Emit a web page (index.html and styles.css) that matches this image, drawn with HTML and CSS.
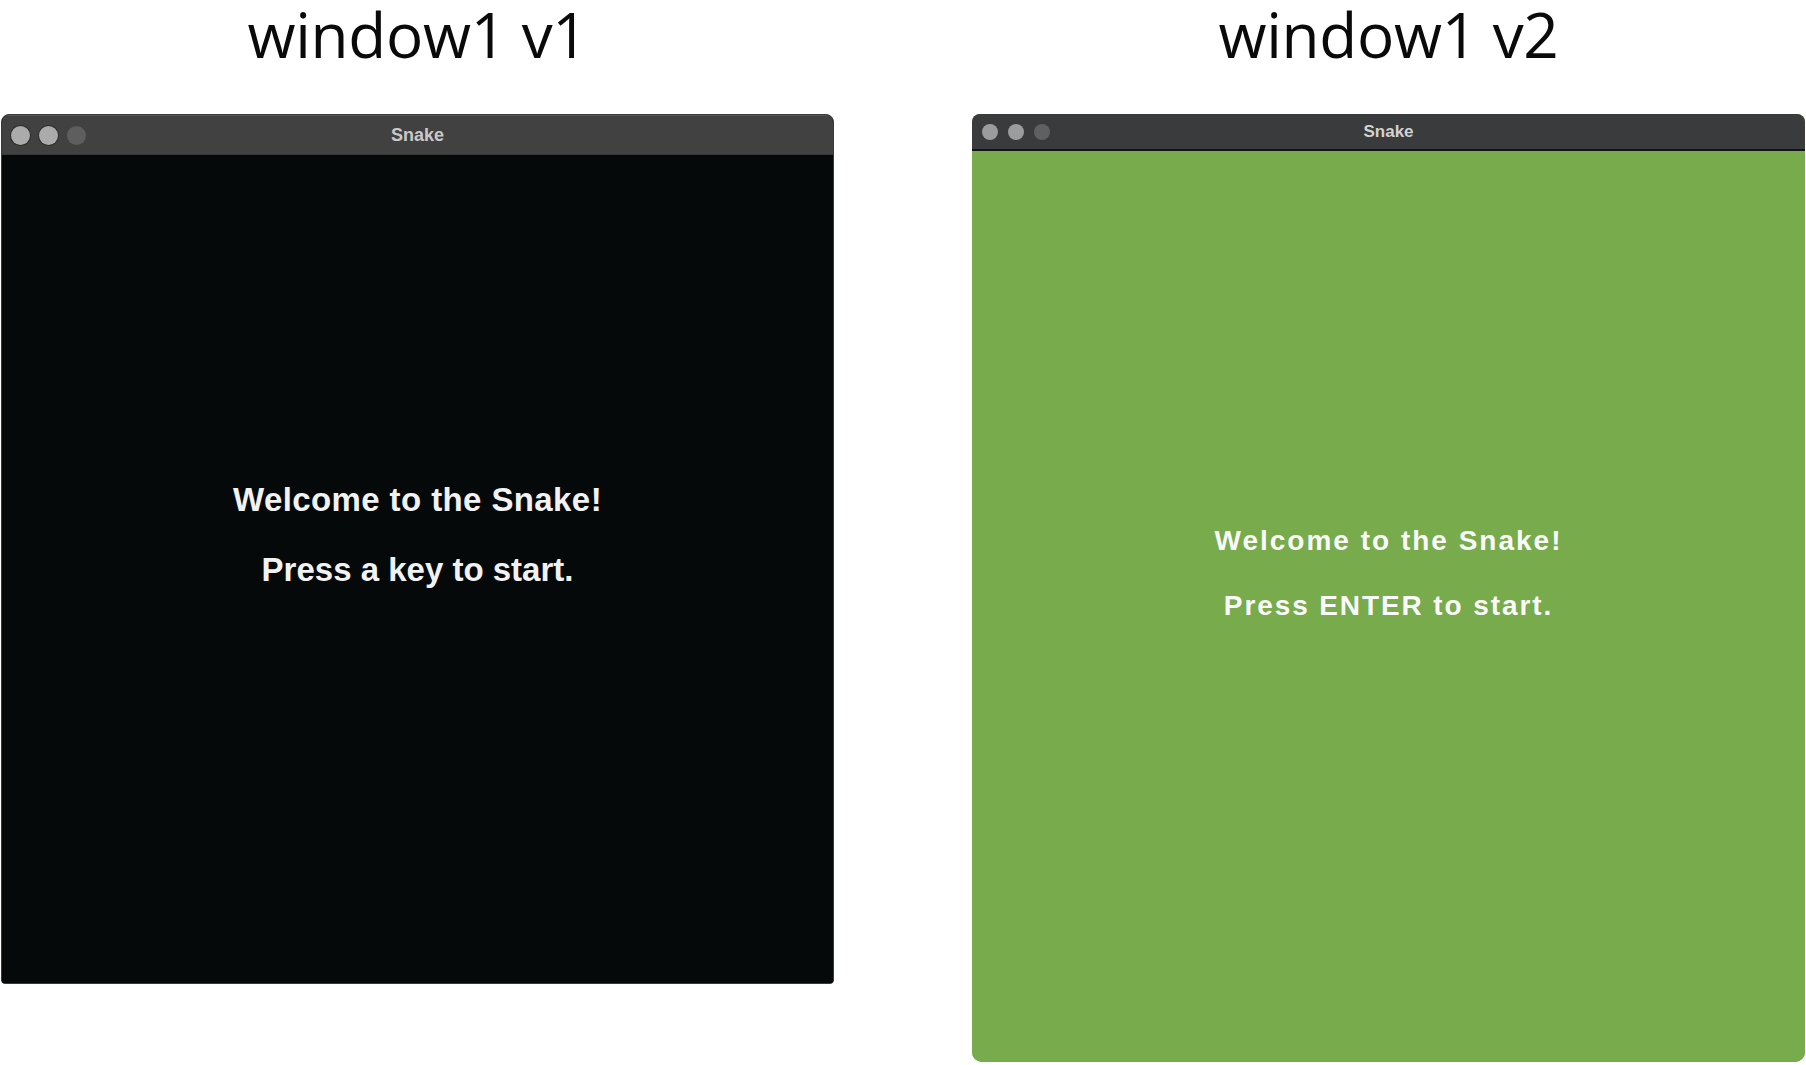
FILE: index.html
```html
<!DOCTYPE html>
<html>
<head>
<meta charset="utf-8">
<link rel="stylesheet" href="styles.css">
</head>
<body>
<div class="page">
  <section class="col">
    <h1 class="heading">window1 v1</h1>
    <div class="window win-dark">
      <div class="titlebar tb-dark">
        <div class="lights">
          <span class="light on"></span><span class="light on"></span><span class="light off"></span>
        </div>
        <div class="title">Snake</div>
        <div></div>
      </div>
      <div class="content content-dark">
        <p class="msg msg1">Welcome to the Snake!</p>
        <p class="msg msg2">Press a key to start.</p>
      </div>
    </div>
  </section>
  <section class="col">
    <h1 class="heading">window1 v2</h1>
    <div class="window win-green">
      <div class="titlebar tb-green">
        <div class="lights">
          <span class="light on"></span><span class="light on"></span><span class="light off"></span>
        </div>
        <div class="title">Snake</div>
        <div></div>
      </div>
      <div class="content content-green">
        <p class="msg msg1">Welcome to the Snake!</p>
        <p class="msg msg2">Press ENTER to start.</p>
      </div>
    </div>
  </section>
</div>
</body>
</html>
```

FILE: styles.css
```css
* { box-sizing: border-box; }
html, body { margin: 0; padding: 0; background: #ffffff; }
body { width: 1806px; height: 1065px; overflow: hidden; }

.page {
  display: flex;
  gap: 138px;
  padding-left: 1px;
}

.col {
  width: 833px;
  display: flex;
  flex-direction: column;
}

.heading {
  margin: 0;
  height: 114px;
  padding-top: 1px;
  font-family: "Open Sans", "Liberation Sans", sans-serif;
  font-weight: 400;
  font-size: 62px;
  line-height: 66px;
  letter-spacing: -0.3px;
  color: #0a0a0a;
  text-align: center;
}

.window {
  display: flex;
  flex-direction: column;
  overflow: hidden;
}

.titlebar {
  display: grid;
  grid-template-columns: 1fr auto 1fr;
  align-items: center;
  font-family: "Liberation Sans", Arial, sans-serif;
  font-weight: 700;
}

.lights {
  display: flex;
  align-items: center;
  padding-left: 10px;
}

.light { display: block; border-radius: 50%; }

.title { text-align: center; }

.content {
  flex: 1;
  display: flex;
  flex-direction: column;
  align-items: center;
  font-family: "Liberation Sans", Arial, sans-serif;
  font-weight: 700;
}

.msg { margin: 0; white-space: nowrap; }

/* ---- v1 dark window ---- */
.win-dark {
  height: 870px;
  border-radius: 8px 8px 4px 4px;
  border: 1px solid #3a3a3a;
  background: #05090a;
}
.tb-dark {
  height: 40px;
  background: #414141;
  border-top: 1px solid #555555;
  border-bottom: 1px solid #383838;
}
.tb-dark .lights { gap: 9px; padding-left: 9px; }
.tb-dark .light { width: 19px; height: 19px; }
.tb-dark .light.on { background: #ababab; box-shadow: 0 0 0 1px #2c2c2c; }
.tb-dark .light.off { background: #5e5e5e; }
.tb-dark .title { font-size: 18px; color: #c9c9c9; }

.content-dark {
  padding-top: 325px;
  background: #05090a;
  color: #f2f2f2;
}
.content-dark .msg { font-size: 33px; line-height: 40px; }
.content-dark .msg1 { letter-spacing: 0.4px; }
.content-dark .msg2 { margin-top: 30px; }

/* ---- v2 green window ---- */
.win-green {
  height: 948px;
  border-radius: 8px 8px 10px 10px;
  background: #77ab4b;
}
.tb-green {
  height: 37px;
  background: #3a3b3d;
  border-bottom: 2px solid #141414;
}
.tb-green .lights { gap: 10px; }
.tb-green .light { width: 16px; height: 16px; }
.tb-green .light.on { background: #9b9c9e; }
.tb-green .light.off { background: #5f6062; }
.tb-green .title { font-size: 17px; color: #d2d2d2; }

.content-green {
  padding-top: 373px;
  background: #77ab4b;
  color: #fafafa;
}
.content-green .msg { font-size: 28px; line-height: 34px; letter-spacing: 2px; }
.content-green .msg2 { margin-top: 31px; letter-spacing: 1.9px; }
```
